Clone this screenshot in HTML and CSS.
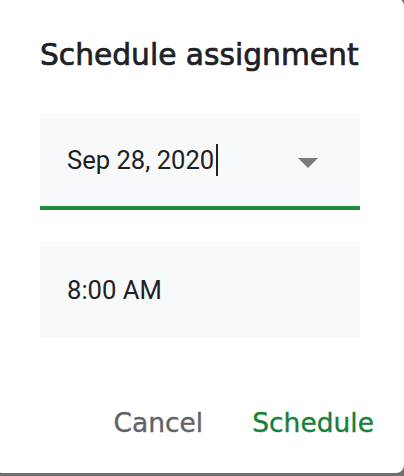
FILE: index.html
```html
<!DOCTYPE html>
<html lang="en">
<head>
<meta charset="utf-8">
<title>Schedule assignment</title>
<link rel="stylesheet" href="styles.css">
</head>
<body>
<div class="dialog" role="dialog" aria-labelledby="dlg-title">
  <h1 class="title" id="dlg-title">Schedule assignment</h1>
  <div class="field field-active">
    <span class="value">Sep 28, 2020</span><span class="caret"></span>
    <svg class="arrow" width="20" height="10" viewBox="0 0 20 10" aria-hidden="true"><path d="M0 0H20L10 10Z" fill="#7b7b7b"/></svg>
  </div>
  <div class="field">
    <span class="value">8:00 AM</span>
  </div>
  <div class="actions">
    <button class="btn btn-cancel" type="button">Cancel</button>
    <button class="btn btn-primary" type="button">Schedule</button>
  </div>
</div>
</body>
</html>
```
FILE: styles.css
```css
html, body {
  margin: 0;
  padding: 0;
  height: 476px;
  overflow: hidden;
}
body {
  background: #6e6e6e;
}
.dialog {
  box-sizing: border-box;
  margin: -2px 0 0 -5px;
  width: 409px;
  height: 475px;
  background: #ffffff;
  border-radius: 8px;
  padding: 39px 44px 0 45px;
  display: flex;
  flex-direction: column;
}
.title {
  margin: 0;
  font-family: "DejaVu Sans", sans-serif;
  font-weight: 400;
  font-size: 29.7px;
  line-height: 36px;
  color: #202124;
  white-space: nowrap;
  -webkit-text-stroke: 0.7px #202124;
}
.field {
  box-sizing: border-box;
  margin-top: 41px;
  height: 96px;
  background: #f8f9fa;
  display: flex;
  align-items: center;
  padding: 0 42px 0 27px;
  font-family: Roboto, sans-serif;
  font-size: 25.6px;
  line-height: 30px;
  color: #202124;
}
.field + .field {
  margin-top: 32px;
}
.field-active {
  border-bottom: 4px solid #1e8e3e;
}
.caret {
  display: inline-block;
  width: 1.5px;
  height: 32px;
  background: #202124;
  margin-left: 2px;
}
.arrow {
  margin-left: auto;
  margin-top: 6px;
}
.actions {
  margin-top: 56px;
  margin-right: -22px;
  display: flex;
  justify-content: flex-end;
  gap: 33px;
}
.btn {
  border: 0;
  background: transparent;
  padding: 0 8px;
  height: 58px;
  font-family: "DejaVu Sans", sans-serif;
  font-weight: 400;
  font-size: 26.5px;
  line-height: 58px;
  letter-spacing: 0;
  cursor: pointer;
}
.btn-cancel {
  color: #5f6368;
  -webkit-text-stroke: 0.35px #5f6368;
}
.btn-primary {
  color: #188038;
  -webkit-text-stroke: 0.35px #188038;
}
```
